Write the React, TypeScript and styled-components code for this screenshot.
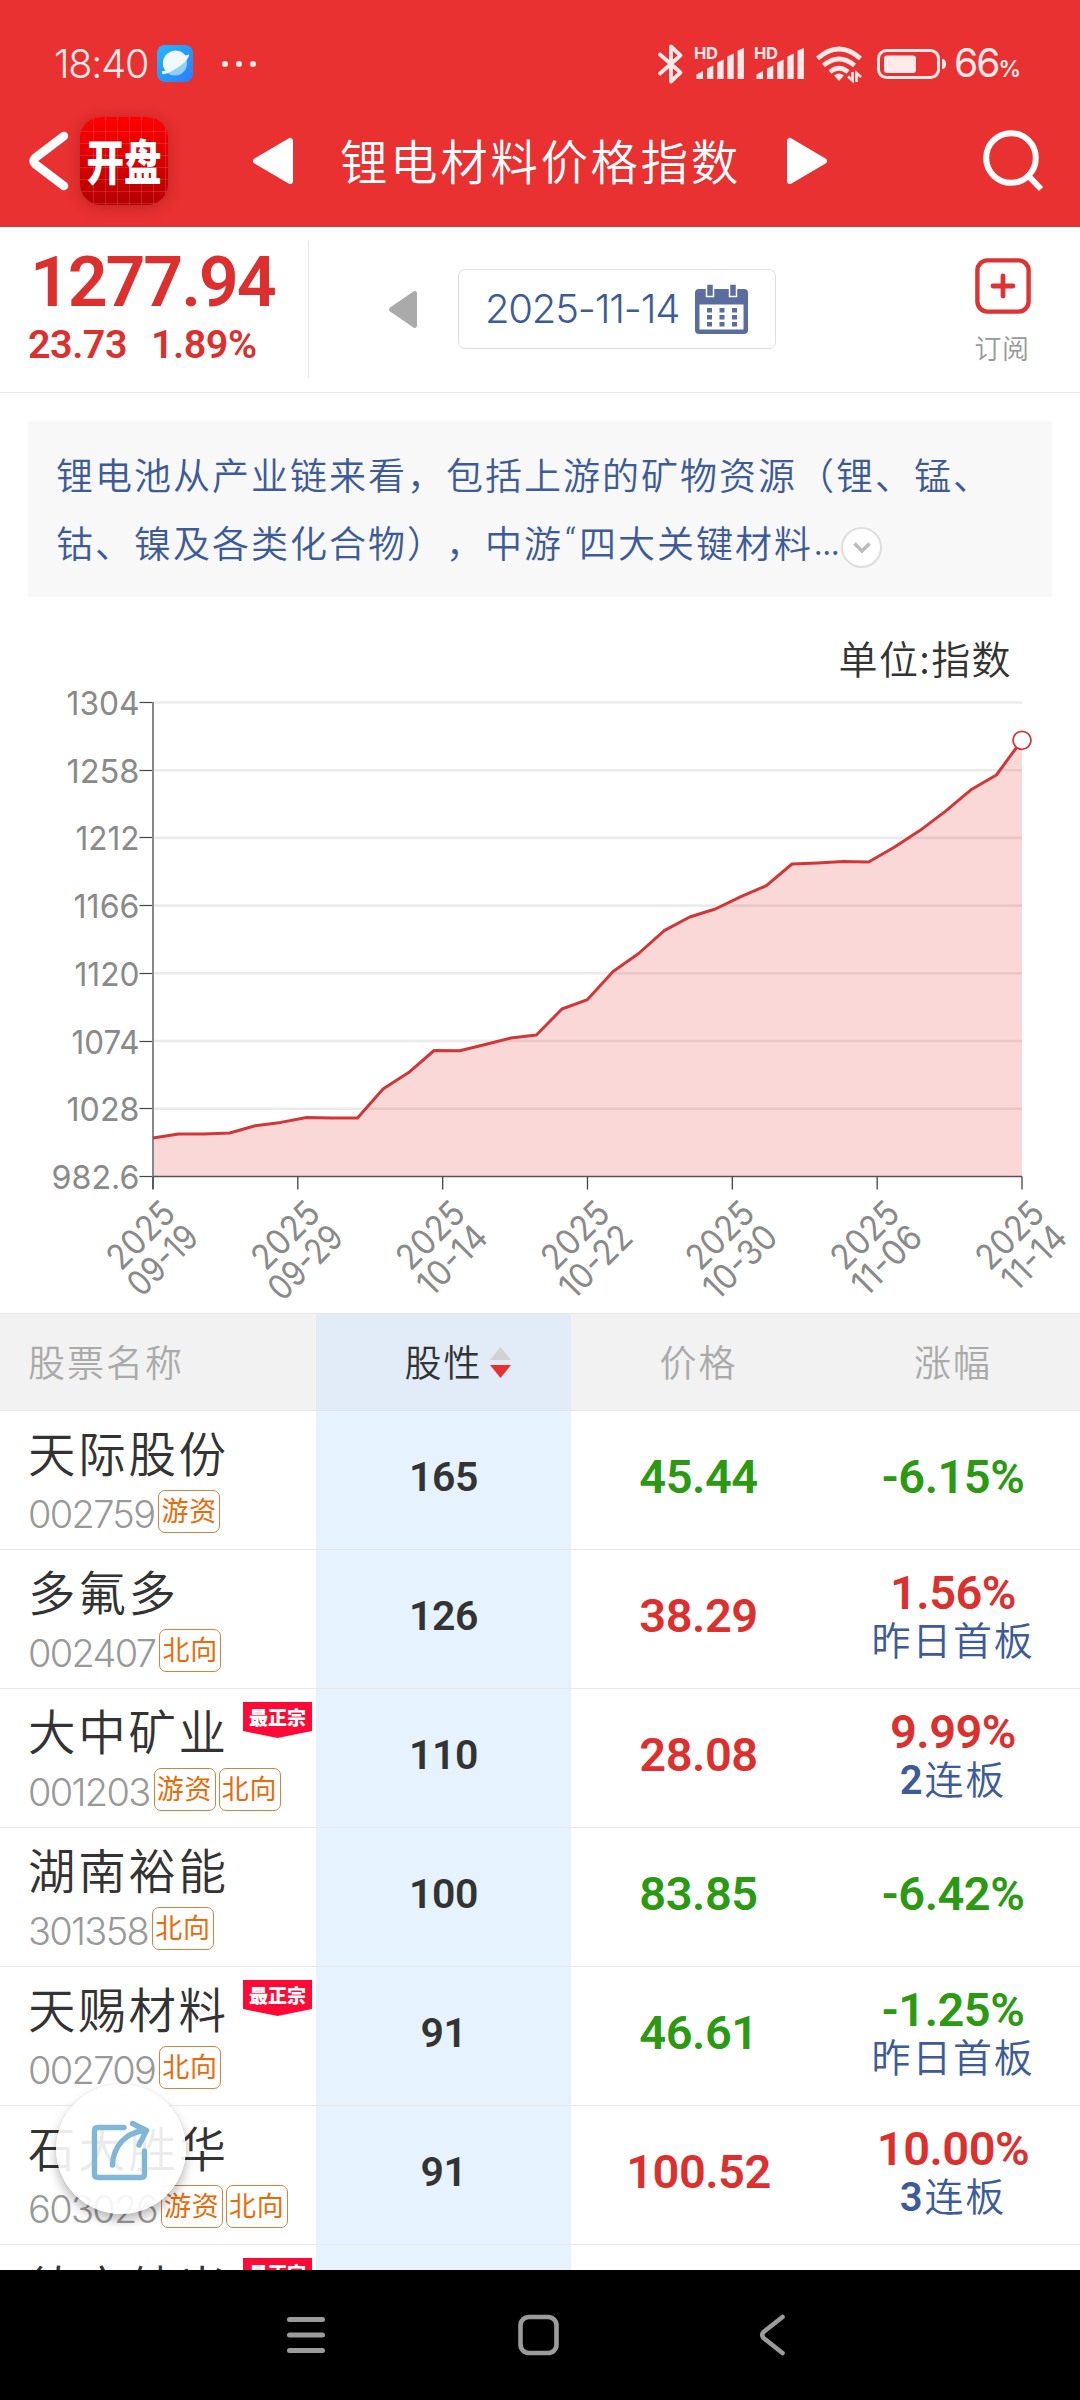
import React from "react";
import styled, { createGlobalStyle } from "styled-components";

const CJK = `"Noto Sans CJK SC", "Noto Sans", sans-serif`;
const LIGHT = `Inter, "Noto Sans CJK SC", sans-serif`;
const DIN = `Roboto, "Noto Sans CJK SC", sans-serif`;

const RED = "#dc302f";
const GREEN = "#2b9a12";
const BLUE = "#3c5b98";

const Global = createGlobalStyle`
  * { box-sizing: border-box; }
  html, body { margin: 0; padding: 0; background: #fff; }
  svg { display: block; flex: none; overflow: visible; }
`;

const Screen = styled.div`
  width: 1080px;
  height: 2400px;
  overflow: hidden;
  display: flex;
  flex-direction: column;
  background: #fff;
  font-family: ${CJK};
  font-weight: 350;
  white-space: nowrap;
  text-spacing-trim: space-all;
`;

/* ---------- header ---------- */

const Top = styled.header`
  flex: none;
  height: 227px;
  background: #e83130;
  border-bottom: 1px solid #c8403f;
  color: #fff;
`;

const StatusBar = styled.div`
  height: 106px;
  padding: 21px 60px 0 54px;
  display: flex;
  align-items: center;
  justify-content: space-between;
  color: #ffe9e9;
`;

const StatusGroup = styled.div`
  display: flex;
  align-items: center;
`;

const Clock = styled.span`
  width: 103px;
  font: 350 39.5px/44px ${LIGHT};
  letter-spacing: -1.2px;
`;

const Dots = styled.div`
  display: flex;
  gap: 8px;
  margin-left: 29px;
  i { width: 6px; height: 6px; border-radius: 3px; background: #ffe9e9; }
`;

const Percent = styled.span`
  margin: 4px 0 0 7px;
  width: 66px;
  font: 400 39px/44px ${LIGHT};
  letter-spacing: -2px;
  small { font-size: 22.5px; font-weight: 600; letter-spacing: 0; margin-left: 0; }
`;

const TitleBar = styled.div`
  height: 110px;
  padding: 0 38px 0 28px;
  display: flex;
  align-items: center;
`;

const AppIcon = styled.div`
  width: 88px;
  height: 88px;
  margin-left: 11px;
  border-radius: 21px;
  display: flex;
  align-items: center;
  justify-content: center;
  background:
    repeating-linear-gradient(90deg, transparent 0 11px, rgba(255,255,255,.13) 11px 12px) 2px 0,
    repeating-linear-gradient(180deg, transparent 0 11px, rgba(255,255,255,.13) 11px 12px) 0 3px,
    linear-gradient(#ff0000, #b40000);
  box-shadow: 0 2px 14px rgba(120, 20, 20, .4);
  span {
    font: 900 37.5px/44px ${CJK};
    transform: translateY(-1px) scaleY(1.27);
  }
`;

const Title = styled.h1`
  margin: -3px 0 0 47px;
  width: 399px;
  font: 350 47.5px/60px ${CJK};
  letter-spacing: 2.6px;
`;

const Spacer = styled.div`
  flex: 1;
`;

/* ---------- index summary ---------- */

const Summary = styled.section`
  flex: none;
  height: 166px;
  border-bottom: 1px solid #e9e9e9;
  display: flex;
  align-items: center;
`;

const IndexBlock = styled.div`
  width: 309px;
  height: 137px;
  border-right: 1px solid #e8e8e8;
  padding-left: 28px;
  color: ${RED};
  font-family: ${DIN};
  font-weight: 600;
`;

const IndexValue = styled.div`
  font-size: 70px;
  line-height: 70px;
  padding: 6px 0 0 2px;
  letter-spacing: -2.2px;
`;

const IndexChange = styled.div`
  display: flex;
  gap: 24px;
  font-size: 39.5px;
  line-height: 46px;
  margin-top: 5px;
  letter-spacing: -0.5px;
`;

const DateBox = styled.div`
  width: 318px;
  height: 80px;
  margin-left: 41px;
  margin-bottom: 2px;
  padding: 0 27px 0 26px;
  border: 1px solid #dedede;
  border-radius: 7px;
  display: flex;
  align-items: center;
  justify-content: space-between;
  color: ${BLUE};
  font: 350 40px/50px ${LIGHT};
  letter-spacing: -1.2px;
`;

const Subscribe = styled.div`
  width: 60px;
  margin-left: 197px;
  margin-top: 4px;
  display: flex;
  flex-direction: column;
  align-items: center;
  color: #999;
  font: 350 27px/36px ${CJK};
  span { margin: 16px 2px -1px 0; letter-spacing: 0.5px; }
`;

/* ---------- description ---------- */

const Description = styled.section`
  flex: none;
  height: 176px;
  margin: 28px 28px 0;
  padding: 19px 0 0 28px;
  background: #f8f8f8;
  color: ${BLUE};
  font: 350 37px/68px ${CJK};
  letter-spacing: 2px;
`;

const DescLine = styled.div`
  height: 68px;
  display: flex;
  align-items: center;
`;

const Quote = styled.span`
  width: 16px;
  padding-left: 2px;
  font-family: Roboto, sans-serif;
  letter-spacing: 0;
`;

const Ellipsis = styled.span`
  width: 28px;
  font-family: Inter, sans-serif;
  letter-spacing: -2px;
`;

const Expand = styled.span`
  width: 41px;
  height: 41px;
  margin-top: 11px;
  border-radius: 50%;
  border: 2px solid #dedede;
  background: #fff;
  display: flex;
  align-items: center;
  justify-content: center;
`;

/* ---------- chart ---------- */

const ChartArea = styled.section`
  flex: none;
  height: 716px;
  display: flex;
  flex-direction: column;
`;

const Unit = styled.div`
  height: 83px;
  padding: 31px 68px 0 0;
  text-align: right;
  color: #333;
  font: 350 39px/58px ${CJK};
  letter-spacing: 1.4px;
`;

const AxisText = styled.text`
  font: 400 33px ${LIGHT};
  fill: #8a8a8a;
  text-anchor: end;
`;

const DateText = styled(AxisText)`
  font-size: 35px;
`;

/* ---------- table ---------- */

const columns = "316px 255px 255px 254px";

const TableHead = styled.div`
  flex: none;
  height: 98px;
  display: grid;
  grid-template-columns: ${columns};
  background: #f2f2f2;
  border-top: 1px solid #e8e8e8;
  border-bottom: 1px solid #e6e6e6;
  color: #aaa;
  font: 350 37px/50px ${CJK};
  letter-spacing: 2px;
`;

const HeadCell = styled.div<{ $left?: boolean; $active?: boolean }>`
  display: flex;
  align-items: center;
  justify-content: ${(p) => (p.$left ? "flex-start" : "center")};
  padding-bottom: 3px;
  padding-left: ${(p) => (p.$left ? "28px" : p.$active ? "28px" : "0")};
  background: ${(p) => (p.$active ? "#e1ecf8" : "transparent")};
  color: ${(p) => (p.$active ? "#333" : "inherit")};
`;

const SortArrows = styled.svg`
  margin: 3px 0 0 7px;
`;

const Rows = styled.div`
  flex: none;
  height: 859px;
  overflow: hidden;
`;

const Row = styled.div`
  height: 139px;
  display: grid;
  grid-template-columns: ${columns};
  border-bottom: 1px solid #e8e8e8;
`;

const NameCell = styled.div`
  padding: 9px 4px 0 28px;
`;

const NameLine = styled.div`
  height: 64px;
  display: flex;
  justify-content: space-between;
  color: #333;
  font: 350 47.5px/64px ${CJK};
  letter-spacing: 2.7px;
`;

const Flag = styled.span`
  width: 69px;
  height: 36px;
  margin-top: 4px;
  background: #ff0a36;
  clip-path: polygon(0 0, 100% 0, 100% 29px, 50% 100%, 0 29px);
  color: #fff;
  text-align: center;
  font: 800 19px/29px ${CJK};
  letter-spacing: 0;
`;

const CodeLine = styled.div`
  display: flex;
  height: 46px;
  margin-top: 6px;
  gap: 3px;
  color: #999;
  font: 350 38px/49px ${LIGHT};
  letter-spacing: -1.7px;
`;

const Code = styled.span`
  padding-right: 1px;
`;

const Tag = styled.span`
  width: 62px;
  height: 43px;
  border: 1px solid #cd8540;
  border-radius: 7px;
  color: #ea6a08;
  text-align: center;
  font: 400 27px/38px ${CJK};
  letter-spacing: 0.8px;
`;

const NumberCell = styled.div<{ $tone?: string; $active?: boolean }>`
  display: flex;
  flex-direction: column;
  align-items: center;
  justify-content: center;
  padding-bottom: 6px;
  background: ${(p) => (p.$active ? "#e6f2fe" : "transparent")};
  color: ${(p) => p.$tone || "#333"};
  font: 600 ${(p) => (p.$active ? "41px" : "47px")}/50px ${DIN};
  letter-spacing: -0.5px;
`;

const BoardNote = styled.div`
  margin: -3px 0 3px;
  color: ${BLUE};
  font: 350 39px/46px ${CJK};
  letter-spacing: 1.8px;
  b { font: 600 40px/40px ${DIN}; }
`;

/* ---------- floating button and nav bar ---------- */

const ShareButton = styled.div`
  position: absolute;
  left: 56px;
  top: 2084px;
  width: 130px;
  height: 130px;
  border-radius: 50%;
  background: rgba(255, 255, 255, 0.9);
  box-shadow: 0 6px 11px rgba(0, 0, 0, 0.28), 0 0 2px rgba(0, 0, 0, 0.1);
  display: flex;
  align-items: center;
  justify-content: center;
  padding-top: 5px;
`;

const NavBar = styled.nav`
  flex: none;
  height: 130px;
  background: #000;
  display: flex;
  align-items: center;
  padding-left: 286px;
`;

/* ---------- drawings ---------- */

const Triangle = ({ w, h, flip, color }: { w: number; h: number; flip?: boolean; color: string }) => (
  <svg width={w} height={h} viewBox="0 0 40 46" preserveAspectRatio="none">
    <path
      d="M3 23 L37 3 V43 Z"
      fill={color}
      stroke={color}
      strokeWidth="6"
      strokeLinejoin="round"
      transform={flip ? "matrix(-1 0 0 1 40 0)" : undefined}
    />
  </svg>
);

const BrowserIcon = () => (
  <svg width="36" height="37" viewBox="0 0 36 37">
    <defs>
      <linearGradient id="sky" x1="0" y1="0" x2="1" y2="1">
        <stop offset="0" stopColor="#22b8fb" />
        <stop offset="1" stopColor="#2a7cf8" />
      </linearGradient>
    </defs>
    <rect width="36" height="37" rx="8" fill="url(#sky)" />
    <circle cx="18" cy="18.5" r="12" fill="#93cdfb" />
    <path d="M8.6 26 A12 12 0 1 1 28.5 10.4 L32 9.5 C33 12 27 19 20 23 C12 28 5 31 5 28 L5 26 Z" fill="#f1f9ff" />
  </svg>
);

const Signal = () => (
  <svg width="60" height="36" viewBox="0 0 60 36">
    <g fill="#ffe9e9">
      <path d="M3.5 33 V28.5 L10 25 V33 Z" />
      <path d="M14 33 V22.5 L20.3 19.5 V33 Z" />
      <path d="M24.3 33 V16.5 L30.6 13.5 V33 Z" />
      <path d="M34.4 33 V10.5 L40.7 7.5 V33 Z" />
      <path d="M44.6 33 V4.5 L50.9 2 V33 Z" />
      <text x="1" y="13" fontFamily="Inter, sans-serif" fontWeight="700" fontSize="16.5" textLength="24">HD</text>
    </g>
  </svg>
);

const StatusIcons = () => (
  <>
    <svg width="36" height="40" viewBox="0 0 36 40" fill="none" stroke="#ffe9e9" strokeWidth="3.8" strokeLinejoin="round" strokeLinecap="round">
      <path d="M3 10.5 L23.5 28.5 L14 37.5 V2.5 L23.5 11.5 L3 29.5" />
    </svg>
    <Signal />
    <Signal />
    <svg width="64" height="40" viewBox="0 0 64 40" fill="none" stroke="#ffe9e9" strokeWidth="4.6">
      <path d="M4.5 14.5 Q26 -4.5 47.5 14.5" />
      <path d="M10.5 21.5 Q26 8.5 41.5 21.5" />
      <path d="M17 28 Q26 20.5 35 28" />
      <path d="M21 31.5 Q26 27.5 31 31.5 L26 37 Z" fill="#ffe9e9" stroke="none" />
      <path d="M39.5 28 V36.5 L35 32.5 M43.5 38 V29 L48 33" strokeWidth="2.6" />
    </svg>
    <svg width="70" height="30" viewBox="0 0 70 30">
      <rect x="1.5" y="1.5" width="60" height="27" rx="8" fill="none" stroke="#ffe9e9" strokeWidth="3" />
      <rect x="7" y="6.5" width="32" height="17.5" rx="3" fill="#ffe9e9" />
      <path d="M65 10 Q69 10 69 15 Q69 20 65 20 Z" fill="#ffe9e9" />
    </svg>
  </>
);

const CalendarIcon = () => (
  <svg width="53" height="50" viewBox="0 0 53 50">
    <rect x="0" y="5" width="53" height="45" rx="4" fill="#5b6c9f" />
    <rect x="4.5" y="20.5" width="44" height="25" fill="#fff" />
    <path d="M11.5 0 H18.5 V12.5 H11.5 Z M34.5 0 H41.5 V12.5 H34.5 Z" fill="#5b6c9f" stroke="#fff" strokeWidth="1.5" />
    {[12, 24.5, 37].map((x) =>
      [24, 31, 38].map((y) => <rect key={`${x}-${y}`} x={x} y={y} width="5" height="4.5" fill="#5b6c9f" />)
    )}
  </svg>
);

/* ---------- data ---------- */

const yLabels: [string, number][] = [
  ["1304", 73], ["1258", 73], ["1212", 64], ["1166", 66],
  ["1120", 65], ["1074", 68], ["1028", 73], ["982.6", 88],
];

const xLabels: [string, number][] = [
  ["09-19", 83], ["09-29", 89], ["10-14", 83], ["10-22", 87],
  ["10-30", 88], ["11-06", 83], ["11-14", 76],
];

const series = [
  1138, 1133.9, 1133.9, 1133, 1125.7, 1122.4, 1117.5, 1118, 1118, 1089, 1072.6, 1050.5,
  1050.8, 1044.5, 1038, 1035, 1009, 999.6, 971.4, 953.5, 930.6, 917, 909, 896.7, 885.7,
  864, 862.9, 861.6, 862, 847.3, 830.6, 811.4, 789.8, 775, 740,
];

type Stock = {
  name: string;
  code: string;
  tags: string[];
  flag?: boolean;
  score: number;
  price: string;
  change: string;
  note?: [string, string];
};

const stocks: Stock[] = [
  { name: "天际股份", code: "002759", tags: ["游资"], score: 165, price: "45.44", change: "-6.15%" },
  { name: "多氟多", code: "002407", tags: ["北向"], score: 126, price: "38.29", change: "1.56%", note: ["", "昨日首板"] },
  { name: "大中矿业", code: "001203", tags: ["游资", "北向"], flag: true, score: 110, price: "28.08", change: "9.99%", note: ["2", "连板"] },
  { name: "湖南裕能", code: "301358", tags: ["北向"], score: 100, price: "83.85", change: "-6.42%" },
  { name: "天赐材料", code: "002709", tags: ["北向"], flag: true, score: 91, price: "46.61", change: "-1.25%", note: ["", "昨日首板"] },
  { name: "石大胜华", code: "603026", tags: ["游资", "北向"], score: 91, price: "100.52", change: "10.00%", note: ["3", "连板"] },
];

const Chart = () => {
  const left = 153;
  const right = 1022;
  const bottom = 1176.5;
  const step = (right - left) / (series.length - 1);
  const line = series.map((y, i) => `${(left + i * step).toFixed(1)},${y}`).join(" ");
  return (
    <svg width="1080" height="633" viewBox="0 680 1080 633">
      {yLabels.map(([label, width], i) => {
        const y = 702.5 + i * 67.7;
        return (
          <g key={label}>
            {i < 7 && <line x1={left} x2={right} y1={y} y2={y} stroke="#ebebeb" strokeWidth="2.6" />}
            <line x1="139.5" x2={left} y1={Math.floor(y) + 0.5} y2={Math.floor(y) + 0.5} stroke="#444" strokeWidth="1.2" />
            <AxisText x="139.5" y={y + 12.5} textLength={width} lengthAdjust="spacingAndGlyphs">{label}</AxisText>
          </g>
        );
      })}
      <polygon points={`${left},${bottom} ${line} ${right},${bottom}`} fill="rgba(226,48,48,.19)" />
      <line x1={left} x2={left} y1="702" y2="1189" stroke="#888" strokeWidth="2" />
      <line x1={left} x2={right} y1={bottom} y2={bottom} stroke="#555" strokeWidth="1.4" />
      <polyline points={line} fill="none" stroke="#d33636" strokeWidth="3" strokeLinejoin="round" />
      <circle cx={right} cy="740.3" r="9" fill="#fff" stroke="#cb3a3c" strokeWidth="1.8" />
      {xLabels.map(([label, width], i) => {
        const x = left + (i * (right - left)) / 6;
        return (
          <g key={label}>
            <line x1={x} x2={x} y1={bottom} y2="1189.5" stroke="#444" strokeWidth="1.3" />
            <DateText transform={`translate(${x + 24.5} 1215.5) rotate(-45)`} textLength="80" lengthAdjust="spacingAndGlyphs">2025</DateText>
            <DateText transform={`translate(${x + 47.5} 1239.5) rotate(-45)`} textLength={width} lengthAdjust="spacingAndGlyphs">{label}</DateText>
          </g>
        );
      })}
    </svg>
  );
};

const StockRow = ({ s }: { s: Stock }) => {
  const tone = s.change.startsWith("-") ? GREEN : RED;
  return (
    <Row>
      <NameCell>
        <NameLine>
          <span>{s.name}</span>
          {s.flag && <Flag>最正宗</Flag>}
        </NameLine>
        <CodeLine>
          <Code>{s.code}</Code>
          {s.tags.map((t) => <Tag key={t}>{t}</Tag>)}
        </CodeLine>
      </NameCell>
      <NumberCell $active>{s.score}</NumberCell>
      <NumberCell $tone={tone}>{s.price}</NumberCell>
      <NumberCell $tone={tone}>
        {s.change}
        {s.note && (
          <BoardNote>
            {s.note[0] && <b>{s.note[0]}</b>}
            {s.note[1]}
          </BoardNote>
        )}
      </NumberCell>
    </Row>
  );
};

export default function App() {
  return (
    <Screen>
      <Global />
      <Top>
        <StatusBar>
          <StatusGroup>
            <Clock>18:40</Clock>
            <BrowserIcon />
            <Dots><i /><i /><i /></Dots>
          </StatusGroup>
          <StatusGroup>
            <StatusIcons />
            <Percent>66<small>%</small></Percent>
          </StatusGroup>
        </StatusBar>
        <TitleBar>
          <svg width="41" height="60" viewBox="0 0 41 60" fill="none" stroke="#fff" strokeWidth="8.5" strokeLinecap="round" strokeLinejoin="round">
            <path d="M36 5 L7 27 Q4 30 7 33 L36 55" />
          </svg>
          <AppIcon><span>开盘</span></AppIcon>
          <svg width="85" height="1" />
          <Triangle w={40} h={46} color="#fff" />
          <Title>锂电材料价格指数</Title>
          <svg width="48" height="1" />
          <Triangle w={40} h={46} flip color="#fff" />
          <Spacer />
          <svg width="60" height="62" viewBox="0 0 60 62" fill="none" stroke="#fff" strokeWidth="6">
            <circle cx="29" cy="28" r="24.8" />
            <path d="M46.5 46 L59 59" />
          </svg>
        </TitleBar>
      </Top>

      <Summary>
        <IndexBlock>
          <IndexValue>1277.94</IndexValue>
          <IndexChange><span>23.73</span><span>1.89%</span></IndexChange>
        </IndexBlock>
        <svg width="80" height="1" />
        <Triangle w={28} h={37} color="#aaa" />
        <DateBox>
          <span>2025-11-14</span>
          <CalendarIcon />
        </DateBox>
        <Subscribe>
          <svg width="56" height="56" viewBox="0 0 56 56" fill="none" stroke="#dd3333" strokeWidth="4.4">
            <rect x="2.4" y="2.4" width="51.2" height="51.2" rx="10" />
            <path d="M28 18 V38 M18 28 H38" strokeWidth="4.8" strokeLinecap="round" />
          </svg>
          <span>订阅</span>
        </Subscribe>
      </Summary>

      <Description>
        <DescLine>锂电池从产业链来看，包括上游的矿物资源（锂、锰、</DescLine>
        <DescLine>
          钴、镍及各类化合物），中游<Quote>“</Quote>四大关键材料<Ellipsis>...</Ellipsis>
          <Expand>
            <svg width="18" height="12" viewBox="0 0 18 12" fill="none" stroke="#bcbcbc" strokeWidth="3.6">
              <path d="M1.5 1.5 L9 9 L16.5 1.5" />
            </svg>
          </Expand>
        </DescLine>
      </Description>

      <ChartArea>
        <Unit>单位:指数</Unit>
        <Chart />
      </ChartArea>

      <TableHead>
        <HeadCell $left>股票名称</HeadCell>
        <HeadCell $active>
          股性
          <SortArrows width="21" height="31" viewBox="0 0 21 31">
            <path d="M10.5 0 L21 13 H0 Z" fill="#d2d2d2" />
            <path d="M10.5 31 L21 18 H0 Z" fill="#e83130" />
          </SortArrows>
        </HeadCell>
        <HeadCell>价格</HeadCell>
        <HeadCell>涨幅</HeadCell>
      </TableHead>
      <Rows>
        {stocks.map((s) => <StockRow key={s.code} s={s} />)}
        <Row>
          <NameCell>
            <NameLine>
              <span>德方纳米</span>
              <Flag>最正宗</Flag>
            </NameLine>
          </NameCell>
          <NumberCell $active />
        </Row>
      </Rows>

      <NavBar>
        <svg width="40" height="44" viewBox="0 0 40 44" stroke="#9b9b9b" strokeWidth="5" strokeLinecap="round">
          <path d="M3.5 6.5 H36.5 M3.5 22 H36.5 M3.5 37.5 H36.5" />
        </svg>
        <svg width="192" height="1" />
        <svg width="41" height="42" viewBox="0 0 41 42" fill="none" stroke="#9b9b9b" strokeWidth="4.6">
          <rect x="2.5" y="3" width="36" height="36" rx="8.5" />
        </svg>
        <svg width="200" height="1" />
        <svg width="28" height="42" viewBox="0 0 28 42" fill="none" stroke="#9b9b9b" strokeWidth="4.6" strokeLinecap="round" strokeLinejoin="round">
          <path d="M23.5 3 L4.5 18 Q2 21 4.5 24 L23.5 39" />
        </svg>
      </NavBar>

      <ShareButton>
        <svg width="60" height="66" viewBox="0 0 60 66" fill="none" stroke="#80b7d7" strokeWidth="5.4" strokeLinecap="round" strokeLinejoin="round">
          <path d="M33 8.5 H7 Q3.5 8.5 3.5 12 V55 Q3.5 58.5 7 58.5 H50 Q53.5 58.5 53.5 55 V32" />
          <path d="M21.5 46 C22 28 34 13.5 54 11.5 M41.5 4.5 L55.5 11.5 L48 26" />
        </svg>
      </ShareButton>
    </Screen>
  );
}
